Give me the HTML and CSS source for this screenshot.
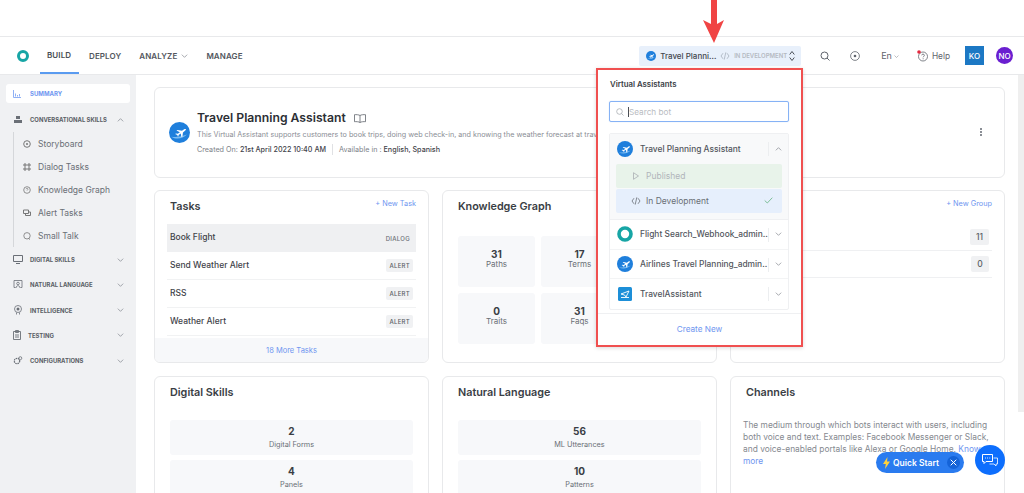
FILE: index.html
```html
<!DOCTYPE html>
<html lang="en">
<head>
    <meta charset="UTF-8">
    <meta name="viewport" content="width=device-width, initial-scale=1.0">
    <title>Virtual Assistants</title>
    <link rel="stylesheet" href="styles.css">
</head>
<body>
    <svg class="defs" width="0" height="0">
        <symbol id="plane-logo" viewBox="0 0 20 20">
            <circle cx="10" cy="10" r="10" fill="#1f7fdc"/>
            <path d="M2 14c5 3 11 2 15-2-5 2-10 3-15 2z" fill="#7bbcf2"/>
            <path transform="translate(2 .8) scale(.85)" d="M4.500 12.500l1-.6 2 .3 2.400-1.700-3.900-2 1.200-.6 5 1.100 2.400-1.700c.8-.5 1.700-.5 2 0 .2.500-.2 1.100-1 1.700l-2.300 1.700-.6 4.500-1.200.7-.7-4-2.400 1.600-.1 1.400-.8.500-.6-1.800z" fill="#fff"/>
        </symbol>
        <symbol id="chev-down" viewBox="0 0 10 6">
            <path d="M1 1l4 4 4-4" fill="none" stroke="#7a7f87" stroke-width="1"/>
        </symbol>
        <symbol id="chev-up" viewBox="0 0 10 6">
            <path d="M1 5l4-4 4 4" fill="none" stroke="#7a7f87" stroke-width="1"/>
        </symbol>
        <symbol id="code" viewBox="0 0 12 10">
            <path d="M3.500 1.500L1 5l2.500 3.500M8.500 1.500L11 5 8.500 8.500M7 .5L5 9.500" fill="none" stroke="currentColor" stroke-width="1"/>
        </symbol>
    </svg>

    <div class="top-strip"></div>

    <header class="topbar">
        <svg class="brand" width="14" height="14" viewBox="0 0 14 14"><circle cx="7" cy="7" r="4.500" fill="none" stroke="#17a5a5" stroke-width="3"/></svg>
        <nav class="main-nav">
            <a class="nav-link active">BUILD</a>
            <a class="nav-link">DEPLOY</a>
            <a class="nav-link">ANALYZE <svg class="chev-sm"><use href="#chev-down"/></svg></a>
            <a class="nav-link">MANAGE</a>
        </nav>
        <div class="top-right">
            <div class="bot-switch">
                <svg class="switch-logo"><use href="#plane-logo"/></svg>
                <span class="switch-name">Travel Planni...</span>
                <svg class="switch-code"><use href="#code"/></svg>
                <span class="switch-state">IN DEVELOPMENT</span>
                <svg class="switch-sort" width="6" height="12" viewBox="0 0 6 12"><path d="M.700 4.500L3 1.500l2.300 3M.700 7.500L3 10.500l2.300-3" fill="none" stroke="#4b5058" stroke-width="1"/></svg>
            </div>
            <svg class="top-search" width="10" height="10" viewBox="0 0 10 10"><circle cx="4.500" cy="4.500" r="3.500" fill="none" stroke="#5f646c"/><path d="M7 7l2.500 2.500" stroke="#5f646c"/></svg>
            <svg class="top-target" width="10" height="10" viewBox="0 0 10 10"><circle cx="5" cy="5" r="4.400" fill="none" stroke="#5f646c" stroke-width=".8"/><circle cx="5" cy="5" r="1.300" fill="#5f646c"/></svg>
            <span class="lang">En <svg class="chev-xs"><use href="#chev-down"/></svg></span>
            <span class="help">
                <svg width="12" height="12" viewBox="0 0 12 12"><circle cx="6" cy="6.500" r="4.500" fill="none" stroke="#5f646c" stroke-width=".8"/><path d="M4.700 5.300c0-1.600 2.700-1.600 2.700 0 0 1-1.300 1-1.300 2" fill="none" stroke="#5f646c" stroke-width=".8"/><circle cx="6.100" cy="8.700" r=".5" fill="#5f646c"/><circle cx="2" cy="2" r="1.800" fill="#e5293e"/></svg>
                Help
            </span>
            <span class="avatar-ko">KO</span>
            <span class="avatar-no">NO</span>
        </div>
    </header>

    <div class="layout">
        <aside class="sidebar">
            <a class="side-summary">
                <svg width="8" height="8" viewBox="0 0 8 8"><path d="M.500 0v7.500H8M2.500 6.500V3.500M4.500 6.500V5M6.500 6.500V4" fill="none" stroke="#8fb0f5"/></svg>
                SUMMARY
            </a>
            <div class="side-head open">
                <svg width="9" height="9" viewBox="0 0 9 9"><path d="M2.500 1h4v3h-4zM.500 5h8v3h-8z" fill="#6a6f76"/></svg>
                <span>CONVERSATIONAL SKILLS</span>
                <svg class="side-chev"><use href="#chev-up"/></svg>
            </div>
            <ul class="side-sub">
                <li><svg width="8" height="8" viewBox="0 0 8 8"><circle cx="4" cy="4" r="3.300" fill="none" stroke="#777"/><circle cx="4" cy="4" r="1" fill="#777"/></svg>Storyboard</li>
                <li><svg width="8" height="8" viewBox="0 0 8 8"><path d="M1 1h2v2H1zM5 1h2v2H5zM1 5h2v2H1zM5 5h2v2H5z" fill="none" stroke="#777"/></svg>Dialog Tasks</li>
                <li><svg width="8" height="8" viewBox="0 0 8 8"><circle cx="4" cy="4" r="3.300" fill="none" stroke="#777" stroke-width=".8"/><path d="M3 3.200c0-1.100 2-1.100 2 0 0 .7-1 .7-1 1.400" fill="none" stroke="#777" stroke-width=".7"/></svg>Knowledge Graph</li>
                <li><svg width="8" height="8" viewBox="0 0 8 8"><path d="M.500 1h5v3.500h-5zM2.500 4.500v2h5V3h-2" fill="none" stroke="#777"/></svg>Alert Tasks</li>
                <li><svg width="8" height="8" viewBox="0 0 8 8"><circle cx="4" cy="3.800" r="3.200" fill="none" stroke="#777" stroke-width=".8"/><path d="M5.500 6.500l1.500 1" stroke="#777" stroke-width=".8"/></svg>Small Talk</li>
            </ul>
            <div class="side-head">
                <svg width="10" height="9" viewBox="0 0 10 9"><path d="M.500.500h9v6h-9zM3 8.500h4" fill="none" stroke="#6a6f76"/></svg>
                <span>DIGITAL SKILLS</span>
                <svg class="side-chev"><use href="#chev-down"/></svg>
            </div>
            <div class="side-head">
                <svg width="9" height="9" viewBox="0 0 9 9"><path d="M2 7.500H.500v-7h8v7H7M2.500 8c0-3 4-3 4 0" fill="none" stroke="#6a6f76" stroke-width=".8"/><circle cx="4.500" cy="3.500" r="1.300" fill="none" stroke="#6a6f76" stroke-width=".8"/></svg>
                <span>NATURAL LANGUAGE</span>
                <svg class="side-chev"><use href="#chev-down"/></svg>
            </div>
            <div class="side-head">
                <svg width="9" height="10" viewBox="0 0 9 10"><circle cx="4.500" cy="4" r="3.500" fill="none" stroke="#6a6f76" stroke-width=".8"/><circle cx="4.500" cy="4" r="1.500" fill="#6a6f76"/><path d="M3 7.500v2M6 7.500v2" stroke="#6a6f76" stroke-width=".8"/></svg>
                <span>INTELLIGENCE</span>
                <svg class="side-chev"><use href="#chev-down"/></svg>
            </div>
            <div class="side-head testing">
                <svg width="8" height="10" viewBox="0 0 8 10"><path d="M.500 1.500h7v8h-7zM2.500.500h3v2h-3zM2 5h4M2 7h4" fill="none" stroke="#6a6f76" stroke-width=".9"/></svg>
                <span>TESTING</span>
                <svg class="side-chev"><use href="#chev-down"/></svg>
            </div>
            <div class="side-head">
                <svg width="9" height="9" viewBox="0 0 9 9"><circle cx="3.500" cy="5" r="2.700" fill="none" stroke="#6a6f76" stroke-width="1.200" stroke-dasharray="1.500 .7"/><circle cx="6.800" cy="2.200" r="1.500" fill="none" stroke="#6a6f76" stroke-width=".8"/></svg>
                <span>CONFIGURATIONS</span>
                <svg class="side-chev"><use href="#chev-down"/></svg>
            </div>
        </aside>

        <main class="content">
            <section class="card hero">
                <svg class="hero-logo"><use href="#plane-logo"/></svg>
                <div class="hero-text">
                    <h1>Travel Planning Assistant
                        <svg width="12" height="9" viewBox="0 0 12 9"><path d="M6 1.500C5 .700 2 .500.500.700v7C2 7.500 5 7.700 6 8.500c1-.8 4-1 5.500-.8v-7C10 .500 7 .700 6 1.500zM6 1.500v7" fill="none" stroke="#5f646c" stroke-width=".8"/></svg>
                    </h1>
                    <p class="hero-desc">This Virtual Assistant supports customers to book trips, doing web check-in, and knowing the weather forecast at travel destinations</p>
                    <p class="hero-meta">Created On: <b>21st April 2022 10:40 AM</b><i></i>Available in : <b>English, Spanish</b></p>
                </div>
                <span class="kebab"></span>
            </section>

            <div class="row-mid">
                <section class="card tasks">
                    <div class="card-head">
                        <h2>Tasks</h2>
                        <a class="link-sm">+ New Task</a>
                    </div>
                    <ul class="task-list">
                        <li class="selected"><span>Book Flight</span><em class="plain">DIALOG</em></li>
                        <li><span>Send Weather Alert</span><em>ALERT</em></li>
                        <li><span>RSS</span><em>ALERT</em></li>
                        <li><span>Weather Alert</span><em>ALERT</em></li>
                    </ul>
                    <a class="more-tasks">18 More Tasks</a>
                </section>

                <section class="card graph">
                    <h2>Knowledge Graph</h2>
                    <div class="tile-grid">
                        <div class="tile"><b>31</b><span>Paths</span></div>
                        <div class="tile"><b>17</b><span>Terms</span></div>
                        <div class="tile"></div>
                        <div class="tile"><b>0</b><span>Traits</span></div>
                        <div class="tile"><b>31</b><span>Faqs</span></div>
                        <div class="tile"></div>
                    </div>
                </section>

                <section class="card groups">
                    <div class="card-head">
                        <h2>&nbsp;</h2>
                        <a class="link-sm">+ New Group</a>
                    </div>
                    <div class="group-row"><span>11</span></div>
                    <div class="group-row"><span>0</span></div>
                </section>
            </div>

            <div class="row-low">
                <section class="card stack">
                    <h2>Digital Skills</h2>
                    <div class="wide-tile"><b>2</b><span>Digital Forms</span></div>
                    <div class="wide-tile"><b>4</b><span>Panels</span></div>
                </section>
                <section class="card stack">
                    <h2>Natural Language</h2>
                    <div class="wide-tile"><b>56</b><span>ML Utterances</span></div>
                    <div class="wide-tile"><b>10</b><span>Patterns</span></div>
                </section>
                <section class="card channels">
                    <h2>Channels</h2>
                    <p>The medium through which bots interact with users, including both voice and text. Examples: Facebook Messenger or Slack, and voice-enabled portals like Alexa or Google Home. <a>Know more</a></p>
                </section>
            </div>
        </main>
    </div>

    <div class="scroll-thumb"></div>

    <!-- red annotation on top of the shot -->
    <svg class="arrow" width="22" height="43" viewBox="0 0 22 43"><path d="M8 0h6v24l7-4-10 23L0 20l8 4z" fill="#f04444"/></svg>

    <div class="bot-menu">
        <h3>Virtual Assistants</h3>
        <div class="bot-search">
            <svg width="8" height="8" viewBox="0 0 8 8"><circle cx="3.500" cy="3.500" r="2.800" fill="none" stroke="#a9adb3" stroke-width=".8"/><path d="M5.500 5.500l2 2" stroke="#a9adb3" stroke-width=".8"/></svg>
            <span class="caret"></span>
            <span>Search bot</span>
        </div>
        <div class="bot-list">
            <div class="bot-open">
                <div class="bot-row first">
                    <svg class="bot-logo"><use href="#plane-logo"/></svg>
                    <span class="bot-name">Travel Planning Assistant</span>
                    <svg class="bot-chev"><use href="#chev-up"/></svg>
                </div>
                <div class="state published">
                    <svg width="6" height="8" viewBox="0 0 6 8"><path d="M.500.700v6.600L5.500 4z" fill="none" stroke="#a9adb3" stroke-width=".8"/></svg>
                    Published
                </div>
                <div class="state developing">
                    <svg class="state-code"><use href="#code"/></svg>
                    In Development
                    <svg class="tick" width="9" height="7" viewBox="0 0 9 7"><path d="M.700 3.500L3.300 6 8.300.700" fill="none" stroke="#7fbf9a"/></svg>
                </div>
            </div>
            <div class="bot-row">
                <svg class="bot-logo" viewBox="0 0 16 16"><circle cx="8" cy="8" r="6" fill="none" stroke="#17a5a5" stroke-width="3.600"/></svg>
                <span class="bot-name">Flight Search_Webhook_admin..</span>
                <svg class="bot-chev"><use href="#chev-down"/></svg>
            </div>
            <div class="bot-row">
                <svg class="bot-logo"><use href="#plane-logo"/></svg>
                <span class="bot-name">Airlines Travel Planning_admin..</span>
                <svg class="bot-chev"><use href="#chev-down"/></svg>
            </div>
            <div class="bot-row">
                <svg class="bot-logo" viewBox="0 0 16 16"><rect x="1" y="1" width="14" height="14" rx="1.500" fill="#1d8fd8"/><path d="M4 8l8-3-3 6-1.500-2zM4 11.500h8" fill="none" stroke="#fff" stroke-width=".9"/></svg>
                <span class="bot-name">TravelAssistant</span>
                <svg class="bot-chev"><use href="#chev-down"/></svg>
            </div>
        </div>
        <a class="create-new">Create New</a>
    </div>

    <div class="quick-start">
        <svg width="7" height="12" viewBox="0 0 7 12"><path d="M4.500 0L0 7h2.800L2 12l5-7.500H4z" fill="#ffd23c"/></svg>
        <span>Quick Start</span>
        <i class="qs-close"><svg width="7" height="7" viewBox="0 0 7 7"><path d="M.700.700l5.600 5.600M6.300.700L.700 6.300" stroke="#fff"/></svg></i>
    </div>
    <div class="chat-fab">
        <svg width="16" height="13" viewBox="0 0 16 13"><path d="M.500.500h10v7H4L2 9.500v-2H.500z" fill="none" stroke="#fff"/><path d="M11.500 4h4v6h-1.500v2L12 10H7.500" fill="none" stroke="#fff" stroke-width=".8"/><path d="M3 4h.8M5.200 4H6M7.400 4h.8" stroke="#fff"/></svg>
    </div>
</body>
</html>
```

FILE: styles.css
```css
* {
    box-sizing: border-box;
}
html, body {
    margin: 0;
    height: 493px;
    overflow: hidden;
}
body {
    position: relative;
    background: #fff;
    font-family: "Inter", "Liberation Sans", sans-serif;
    color: #3a3e45;
}
h1, h2, h3, p, ul {
    margin: 0;
    padding: 0;
}
ul {
    list-style: none;
}
svg {
    display: block;
    flex: none;
}
.defs {
    position: absolute;
}

/* top bar */
.top-strip {
    height: 37px;
    border-bottom: 1px solid #e8e9eb;
}
.topbar {
    height: 38px;
    display: flex;
    align-items: center;
    padding-left: 16px;
    border-bottom: 1px solid #e8e9eb;
}
.main-nav {
    display: flex;
    align-items: center;
    margin-left: 10px;
    height: 37px;
}
.nav-link {
    height: 37px;
    display: flex;
    align-items: center;
    gap: 4px;
    margin-right: 18px;
    font-size: 8px;
    font-weight: 600;
    letter-spacing: .1px;
    color: #52565d;
}
.nav-link.active {
    color: #4a4e55;
    padding: 0 7px;
    width: 39px;
    margin-right: 10px;
    border-bottom: 2px solid #5a9bf0;
}
.chev-sm {
    width: 7px;
    height: 4px;
}
.chev-xs {
    width: 5px;
    height: 3px;
    margin-top: 2px;
}
.top-right {
    margin-left: auto;
    display: flex;
    align-items: center;
    padding-right: 11px;
}
.bot-switch {
    width: 162px;
    height: 20px;
    display: flex;
    align-items: center;
    padding-left: 7px;
    background: #e8f0fb;
    border-radius: 2px;
    margin-right: 19px;
}
.switch-logo {
    width: 10px;
    height: 10px;
    margin-right: 4px;
}
.switch-name {
    font-size: 8px;
    font-weight: 500;
    color: #43474e;
    width: 60px;
}
.switch-code {
    width: 10px;
    height: 8px;
    color: #a7b0bd;
}
.switch-state {
    margin-left: 4px;
    font-size: 6px;
    font-weight: 600;
    color: #b5bac2;
    white-space: nowrap;
}
.switch-sort {
    margin-left: 2px;
}
.top-search {
    margin-right: 20px;
}
.top-target {
    margin-right: 21px;
}
.lang {
    display: flex;
    align-items: center;
    gap: 2px;
    font-size: 9px;
    color: #5f646c;
    margin-right: 18px;
}
.help {
    display: flex;
    align-items: center;
    gap: 3px;
    font-size: 8.300px;
    color: #5f646c;
    margin-right: 15px;
}
.avatar-ko {
    width: 19px;
    height: 19px;
    background: #1c78c4;
    color: #fff;
    font-size: 8px;
    font-weight: 500;
    display: flex;
    align-items: center;
    justify-content: center;
    margin-right: 12px;
}
.avatar-no {
    width: 17px;
    height: 17px;
    border-radius: 50%;
    background: #6a1fd0;
    color: #fff;
    font-size: 8px;
    font-weight: 500;
    display: flex;
    align-items: center;
    justify-content: center;
}

/* sidebar */
.layout {
    display: flex;
    height: 418px;
}
.sidebar {
    width: 136px;
    flex: none;
    background: #f0f1f3;
    padding: 9px 6px 0;
}
.side-summary {
    height: 19px;
    display: flex;
    align-items: center;
    gap: 9px;
    padding-left: 7px;
    background: #fff;
    border-radius: 3px;
    font-size: 6px;
    font-weight: 700;
    color: #6f96f0;
    margin-bottom: 4px;
}
.side-head {
    height: 25.200px;
    display: flex;
    align-items: center;
    padding-left: 7px;
    font-size: 5.900px;
    font-weight: 700;
    color: #5a5e65;
}
.side-head span {
    margin-left: 7px;
}
.side-head.testing span {
    margin-left: 6px;
}
.side-head.testing {
    padding-left: 6px;
}
.side-head svg:first-child {
    width: 10px;
}
.side-chev {
    width: 7px;
    height: 4px;
    margin-left: auto;
    margin-right: 6px;
}
.side-sub {
    margin: 0 0 0 7px;
    border-left: 1px solid #d5d7da;
}
.side-sub li {
    height: 23px;
    display: flex;
    align-items: center;
    gap: 7px;
    padding-left: 9px;
    font-size: 8.500px;
    color: #6a6f76;
}

/* cards */
.content {
    flex: 1;
    padding: 12px 19px 0 18px;
    min-width: 0;
    overflow: hidden;
}
.card {
    background: #fff;
    border: 1px solid #e8e9eb;
    border-radius: 6px;
}
h2 {
    font-size: 10.800px;
    font-weight: 600;
    line-height: 13px;
    color: #3a3e45;
}
.hero {
    height: 91px;
    display: flex;
    align-items: center;
    padding-left: 14px;
    position: relative;
}
.hero-logo {
    width: 21px;
    height: 21px;
    margin-right: 7px;
}
.hero-text {
    min-width: 0;
    width: 560px;
}
.hero h1 {
    display: flex;
    align-items: center;
    gap: 8px;
    font-size: 12.200px;
    font-weight: 600;
    color: #2c2f35;
    line-height: 16px;
}
.hero-desc {
    font-size: 7.200px;
    color: #8a8e95;
    line-height: 11px;
    margin-top: 3px;
    white-space: nowrap;
    overflow: hidden;
}
.hero-meta {
    display: flex;
    align-items: center;
    font-size: 7.200px;
    color: #7d8188;
    margin-top: 4px;
    line-height: 11px;
    white-space: pre;
}
.hero-meta b {
    font-weight: 500;
    color: #3f434a;
}
.hero-meta i {
    width: 1px;
    height: 11px;
    background: #e0e1e4;
    margin: 0 6px;
}
.kebab {
    position: absolute;
    right: 22px;
    top: 40px;
    width: 2px;
    height: 2px;
    background: #8a8e95;
    box-shadow: 0 3px 0 #8a8e95, 0 6px 0 #8a8e95;
}
.row-mid {
    display: grid;
    grid-template-columns: repeat(3, 275px);
    gap: 13px;
    margin-top: 12px;
}
.row-low {
    display: grid;
    grid-template-columns: repeat(3, 275px);
    gap: 13px;
    margin-top: 13px;
}
.row-mid .card {
    height: 173px;
}
.card-head {
    display: flex;
    justify-content: space-between;
    padding-right: 12px;
}
.link-sm {
    font-size: 7.300px;
    color: #6f96f0;
    padding-top: 8px;
}

/* tasks */
.tasks {
    position: relative;
    overflow: hidden;
}
.tasks h2 {
    padding: 9px 0 0 15px;
}
.task-list {
    margin: 11px 12px 0;
    height: 112px;
    overflow: hidden;
}
.task-list li {
    height: 28px;
    display: flex;
    align-items: center;
    justify-content: space-between;
    padding: 0 3px 2px;
    font-size: 8.500px;
    font-weight: 500;
    color: #3f434a;
    border-bottom: 1px solid #f1f2f3;
}
.task-list li.selected {
    background: #eff0f2;
    border-bottom: none;
}
.task-list em {
    font-style: normal;
    font-size: 6px;
    font-weight: 500;
    letter-spacing: .3px;
    background: #f0f1f3;
    color: #5a5e65;
    padding: 3px;
    border-radius: 2px;
    margin-top: 2px;
}
.task-list em.plain {
    background: none;
    color: #6a6f76;
}
.more-tasks {
    position: absolute;
    left: 0;
    right: 0;
    bottom: 0;
    height: 24px;
    background: #f7f8fa;
    display: flex;
    align-items: center;
    justify-content: center;
    font-size: 7.500px;
    color: #6f96f0;
}

/* knowledge graph */
.graph {
    padding: 9px 15px 0;
}
.tile-grid {
    display: grid;
    grid-template-columns: repeat(3, 77px);
    grid-auto-rows: 51px;
    gap: 6px;
    margin-top: 23px;
}
.tile, .wide-tile {
    background: #f7f8fa;
    border-radius: 3px;
    display: flex;
    flex-direction: column;
    align-items: center;
    justify-content: center;
}
.tile {
    padding-bottom: 7px;
}
.tile b, .wide-tile b {
    font-size: 10px;
    font-weight: 700;
    color: #3a3e45;
    line-height: 12px;
}
.tile span {
    font-size: 8px;
    color: #6a6f76;
    line-height: 9px;
}
.wide-tile span {
    font-size: 7.300px;
    color: #6a6f76;
    line-height: 15px;
}

/* groups */
.groups {
    padding-left: 15px;
}
.group-row {
    height: 27px;
    margin-right: 12px;
    display: flex;
    align-items: center;
    justify-content: flex-end;
    border-bottom: 1px solid #eff0f2;
}
.groups .card-head {
    height: 33px;
}
.group-row span {
    min-width: 18px;
    padding: 0 6px;
    height: 16px;
    display: flex;
    align-items: center;
    justify-content: center;
    font-size: 8.500px;
    font-weight: 500;
    color: #5a5e65;
    background: #f0f1f3;
    border-radius: 2px;
    margin-right: 3px;
}

/* bottom row */
.row-low .card {
    height: 140px;
}
.stack {
    padding: 9px 15px 0;
}
.wide-tile {
    height: 35px;
    padding-top: 2px;
    margin-bottom: 5px;
}
.wide-tile:first-of-type {
    margin-top: 21px;
}
.channels {
    padding: 9px 12px 0;
}
.channels h2 {
    padding-left: 3px;
}
.channels p {
    margin-top: 20px;
    font-size: 8.400px;
    line-height: 12px;
    color: #85898f;
}
.channels a {
    color: #6f96f0;
}
.scroll-thumb {
    position: absolute;
    left: 1018px;
    top: 75px;
    width: 6px;
    height: 337px;
    background: #efefef;
}

/* overlays */
.arrow {
    position: absolute;
    left: 703px;
    top: 0;
}
.bot-menu {
    position: absolute;
    left: 596px;
    top: 68px;
    width: 207px;
    height: 279px;
    background: #fff;
    border: 2px solid #f05050;
    box-shadow: 0 1px 4px rgba(0, 0, 0, .15);
}
.bot-menu h3 {
    font-size: 7.800px;
    font-weight: 600;
    color: #3a3e45;
    padding: 9px 0 0 12px;
    line-height: 11px;
}
.bot-search {
    display: flex;
    align-items: center;
    height: 21px;
    margin: 11px 12px 0 11px;
    padding-left: 6px;
    border: 1px solid #86b2f5;
    box-shadow: 0 0 1px #a9c8f5;
    border-radius: 2px;
    font-size: 8.200px;
    color: #b9bcc2;
}
.caret {
    width: 1px;
    height: 10px;
    background: #4a4e55;
    margin: 0 0 0 4px;
}
.bot-list {
    margin: 11px 12px 0 11px;
    border: 1px solid #eff0f2;
    border-radius: 2px;
}
.bot-open {
    background: #f8f9fa;
    height: 86px;
    border-bottom: 1px solid #eff0f2;
}
.bot-row {
    height: 29.500px;
    display: flex;
    align-items: center;
    padding-left: 7px;
    border-bottom: 1px solid #f3f4f5;
    position: relative;
}
.bot-row:last-child {
    border-bottom: none;
}
.bot-row.first {
    border-bottom: none;
}
.bot-logo {
    width: 16px;
    height: 16px;
    margin-right: 7px;
}
.bot-name {
    font-size: 8.400px;
    font-weight: 500;
    color: #52565d;
    white-space: nowrap;
}
.bot-chev {
    position: absolute;
    right: 6px;
    width: 7px;
    height: 4px;
}
.bot-row::after {
    content: "";
    position: absolute;
    right: 19px;
    top: 8px;
    width: 1px;
    height: 14px;
    background: #eceef0;
}
.state {
    height: 24px;
    margin: 0 6px 1px;
    display: flex;
    align-items: center;
    padding-left: 15px;
    gap: 5px;
    font-size: 8.500px;
    border-radius: 2px;
}
.state.published {
    background: #e8f3ea;
    color: #b1b5ba;
    padding-left: 17px;
    gap: 7px;
}
.state.developing {
    background: #e6effc;
    color: #6a6f76;
}
.state-code {
    width: 10px;
    height: 8px;
    color: #6a6f76;
}
.tick {
    margin-left: auto;
    margin-right: 9px;
}
.create-new {
    position: absolute;
    left: 0;
    right: 0;
    bottom: 0;
    height: 32px;
    padding-bottom: 2px;
    border-top: 1px solid #eff0f2;
    display: flex;
    align-items: center;
    justify-content: center;
    font-size: 8.200px;
    color: #6f96f0;
}
.quick-start {
    position: absolute;
    left: 876px;
    top: 452px;
    width: 88px;
    height: 21px;
    border-radius: 11px;
    background: #2a7bef;
    display: flex;
    align-items: center;
    padding-left: 7px;
    color: #fff;
    font-size: 8.500px;
    font-weight: 600;
    gap: 3px;
}
.qs-close {
    position: absolute;
    right: 4px;
    top: 4px;
    width: 13px;
    height: 13px;
    border-radius: 50%;
    background: #1463d8;
    display: flex;
    align-items: center;
    justify-content: center;
}
.chat-fab {
    position: absolute;
    left: 975px;
    top: 445px;
    width: 30px;
    height: 30px;
    border-radius: 50%;
    background: #0d6efd;
    display: flex;
    align-items: center;
    justify-content: center;
}
```
